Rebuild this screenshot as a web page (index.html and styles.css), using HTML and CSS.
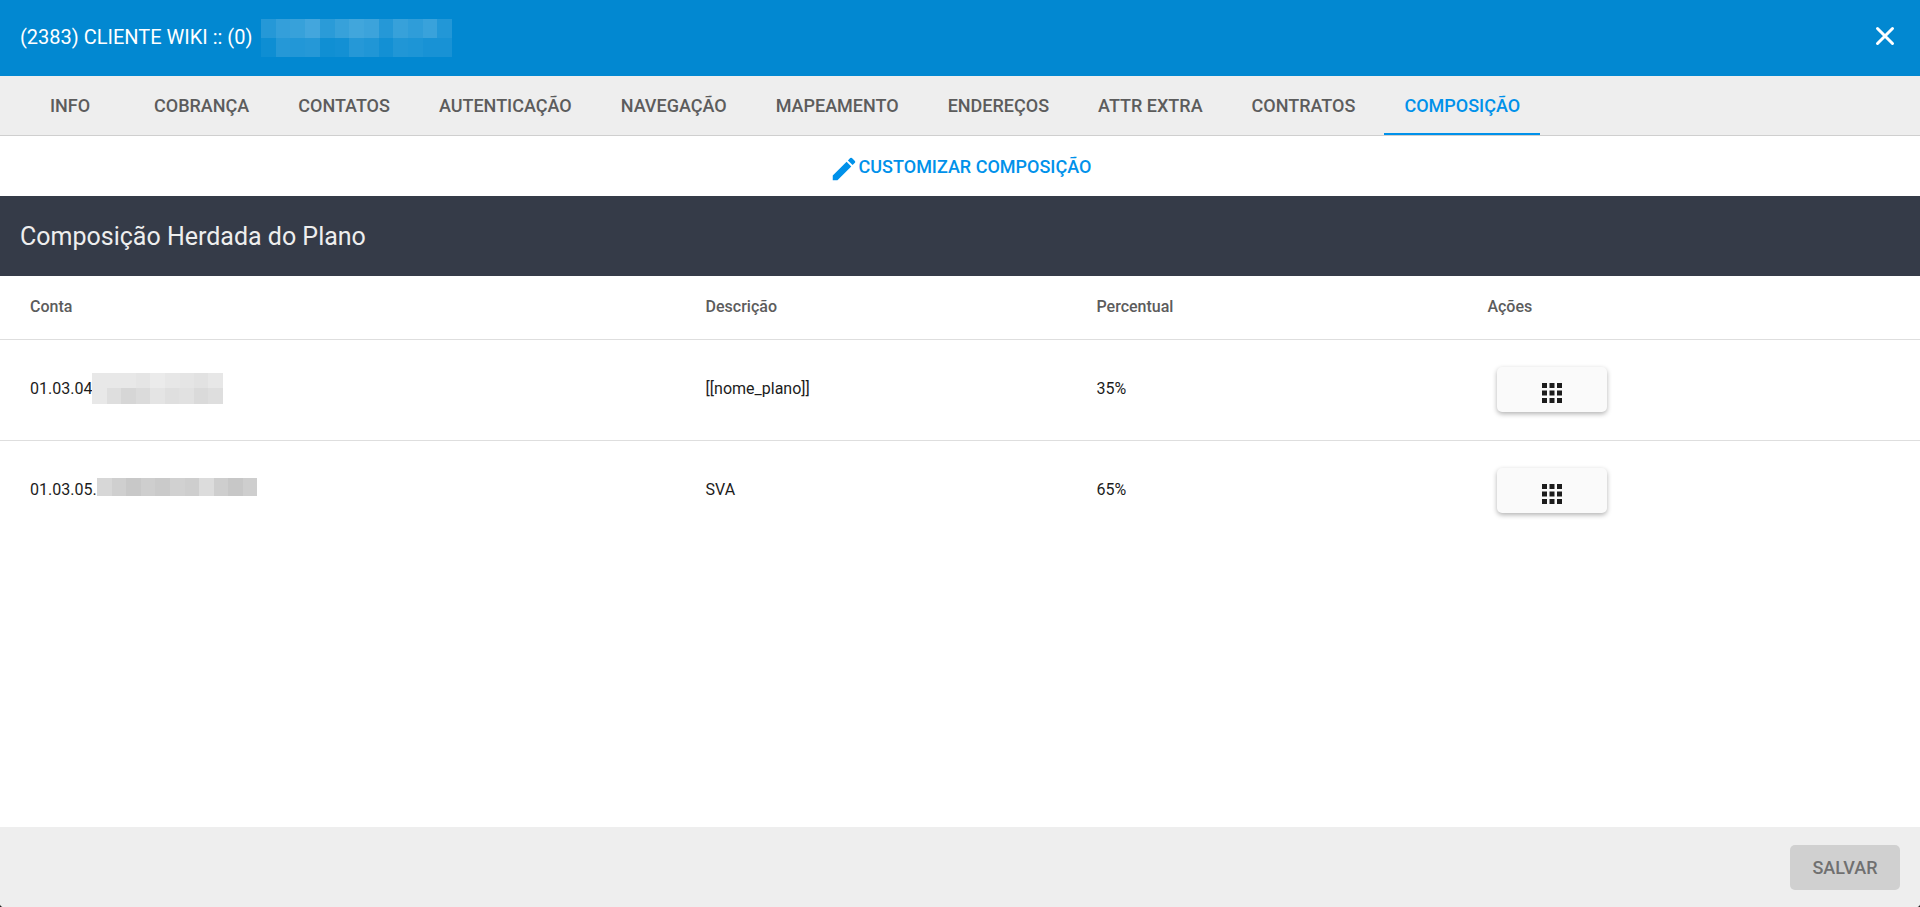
FILE: index.html
```html
<!DOCTYPE html>
<html lang="pt-BR">
<head>
<meta charset="utf-8">
<title>Cliente Wiki</title>
<link rel="stylesheet" href="styles.css">
</head>
<body>
<div class="dialog">
  <header class="toolbar">
    <h1 class="toolbar-title">(2383) CLIENTE WIKI :: (0)</h1>
    <svg class="mosaic mosaic-name" width="191" height="38" viewBox="0 0 191 38" shape-rendering="crispEdges" fill="#fff" aria-hidden="true">
      <g>
        <rect x="0" y="0" width="15" height="19" opacity=".14"/><rect x="15" y="0" width="14" height="19" opacity=".2"/><rect x="29" y="0" width="15" height="19" opacity=".21"/><rect x="44" y="0" width="15" height="19" opacity=".26"/><rect x="59" y="0" width="15" height="19" opacity=".16"/><rect x="74" y="0" width="14" height="19" opacity=".21"/><rect x="88" y="0" width="15" height="19" opacity=".25"/><rect x="103" y="0" width="15" height="19" opacity=".23"/><rect x="118" y="0" width="14" height="19" opacity=".14"/><rect x="132" y="0" width="15" height="19" opacity=".21"/><rect x="147" y="0" width="15" height="19" opacity=".18"/><rect x="162" y="0" width="14" height="19" opacity=".22"/><rect x="176" y="0" width="15" height="19" opacity=".13"/>
      </g>
      <g>
        <rect x="0" y="19" width="15" height="19" opacity=".05"/><rect x="15" y="19" width="14" height="19" opacity=".14"/><rect x="29" y="19" width="15" height="19" opacity=".13"/><rect x="44" y="19" width="15" height="19" opacity=".14"/><rect x="59" y="19" width="15" height="19" opacity=".06"/><rect x="74" y="19" width="14" height="19" opacity=".07"/><rect x="88" y="19" width="15" height="19" opacity=".14"/><rect x="103" y="19" width="15" height="19" opacity=".12"/><rect x="118" y="19" width="14" height="19" opacity=".07"/><rect x="132" y="19" width="15" height="19" opacity=".12"/><rect x="147" y="19" width="15" height="19" opacity=".11"/><rect x="162" y="19" width="14" height="19" opacity=".09"/><rect x="176" y="19" width="15" height="19" opacity=".09"/>
      </g>
    </svg>
    <button class="close" type="button" aria-label="Fechar">
      <svg width="30" height="30" viewBox="0 0 30 30" fill="none" stroke="#fff" stroke-width="3" stroke-linecap="round" aria-hidden="true"><path d="M7.5 7.5l15 15M22.5 7.5l-15 15"/></svg>
    </button>
  </header>
  <nav class="tabs">
    <button class="tab" type="button">INFO</button>
    <button class="tab" type="button">COBRANÇA</button>
    <button class="tab" type="button">CONTATOS</button>
    <button class="tab" type="button">AUTENTICAÇÃO</button>
    <button class="tab" type="button">NAVEGAÇÃO</button>
    <button class="tab" type="button">MAPEAMENTO</button>
    <button class="tab" type="button">ENDEREÇOS</button>
    <button class="tab" type="button">ATTR EXTRA</button>
    <button class="tab" type="button">CONTRATOS</button>
    <button class="tab tab-active" type="button">COMPOSIÇÃO</button>
  </nav>
  <main class="content">
    <div class="customize">
      <button class="customize-button" type="button">
        <svg class="customize-icon" width="30" height="30" viewBox="0 0 24 24" fill="currentColor" aria-hidden="true"><path d="M3 17.25V21h3.75L17.81 9.94l-3.75-3.75L3 17.25zM20.71 7.04a1 1 0 0 0 0-1.41l-2.34-2.34a1 1 0 0 0-1.41 0l-1.83 1.83 3.75 3.75 1.83-1.83z"/></svg>
        <span>CUSTOMIZAR COMPOSIÇÃO</span>
      </button>
    </div>
    <h2 class="section-title">Composição Herdada do Plano</h2>
    <table class="accounts">
      <thead>
        <tr><th class="col-account">Conta</th><th class="col-data">Descrição</th><th class="col-data">Percentual</th><th>Ações</th></tr>
      </thead>
      <tbody>
        <tr>
          <td>
            <div class="account"><span>01.03.04</span>
              <svg class="mosaic" width="131" height="31" viewBox="0 0 131 31" shape-rendering="crispEdges" aria-hidden="true">
                <rect width="44" height="15" fill="#e8e8e8"/><rect x="44" width="14" height="15" fill="#e5e5e5"/><rect x="58" width="15" height="15" fill="#ebebeb"/><rect x="73" width="15" height="15" fill="#e7e7e7"/><rect x="88" width="14" height="15" fill="#e5e5e5"/><rect x="102" width="14" height="15" fill="#e2e2e2"/><rect x="116" width="15" height="15" fill="#e7e7e7"/>
                <rect y="15" width="15" height="16" fill="#e8e8e8"/><rect x="15" y="15" width="14" height="16" fill="#dedede"/><rect x="29" y="15" width="15" height="16" fill="#d6d6d6"/><rect x="44" y="15" width="14" height="16" fill="#dbdbdb"/><rect x="58" y="15" width="15" height="16" fill="#e4e4e4"/><rect x="73" y="15" width="14" height="16" fill="#dfdfdf"/><rect x="87" y="15" width="15" height="16" fill="#e1e1e1"/><rect x="102" y="15" width="14" height="16" fill="#dadada"/><rect x="116" y="15" width="15" height="16" fill="#dedede"/>
              </svg>
            </div>
          </td>
          <td>[[nome_plano]]</td>
          <td>35%</td>
          <td>
            <button class="actions" type="button" aria-label="Ações">
              <svg width="30" height="30" viewBox="0 0 24 24" fill="#1c1c1c" aria-hidden="true"><path d="M4 8h4V4H4v4zm6 12h4v-4h-4v4zm-6 0h4v-4H4v4zm0-6h4v-4H4v4zm6 0h4v-4h-4v4zm6-10v4h4V4h-4zm-6 4h4V4h-4v4zm6 6h4v-4h-4v4zm0 6h4v-4h-4v4z"/></svg>
            </button>
          </td>
        </tr>
        <tr>
          <td>
            <div class="account"><span>01.03.05.</span>
              <svg class="mosaic mosaic-low" width="160" height="18" viewBox="0 0 160 18" shape-rendering="crispEdges" aria-hidden="true">
                <rect width="15" height="18" fill="#d7d7d7"/><rect x="15" width="14" height="18" fill="#cfcfcf"/><rect x="29" width="15" height="18" fill="#c8c8c8"/><rect x="44" width="14" height="18" fill="#cecece"/><rect x="58" width="15" height="18" fill="#cacaca"/><rect x="73" width="15" height="18" fill="#d1d1d1"/><rect x="88" width="14" height="18" fill="#cecece"/><rect x="102" width="15" height="18" fill="#dcdcdc"/><rect x="117" width="14" height="18" fill="#cecece"/><rect x="131" width="15" height="18" fill="#c7c7c7"/><rect x="146" width="14" height="18" fill="#cecece"/>
              </svg>
            </div>
          </td>
          <td>SVA</td>
          <td>65%</td>
          <td>
            <button class="actions" type="button" aria-label="Ações">
              <svg width="30" height="30" viewBox="0 0 24 24" fill="#1c1c1c" aria-hidden="true"><path d="M4 8h4V4H4v4zm6 12h4v-4h-4v4zm-6 0h4v-4H4v4zm0-6h4v-4H4v4zm6 0h4v-4h-4v4zm6-10v4h4V4h-4zm-6 4h4V4h-4v4zm6 6h4v-4h-4v4zm0 6h4v-4h-4v4z"/></svg>
            </button>
          </td>
        </tr>
      </tbody>
    </table>
  </main>
  <footer class="footer">
    <button class="save" type="button" disabled>SALVAR</button>
  </footer>
</div>
</body>
</html>
```
FILE: styles.css
```css
* {
  box-sizing: border-box;
}

body {
  margin: 0;
  background: #222;
  color: #1c1c1c;
  font-family: Roboto, "Liberation Sans", sans-serif;
  font-size: 16px;
}

button {
  margin: 0;
  padding: 0;
  border: 0;
  background: none;
  font: inherit;
  color: inherit;
}

svg {
  display: block;
  flex: none;
}

.dialog {
  display: flex;
  flex-direction: column;
  min-height: 100vh;
  border-radius: 0 0 4px 4px;
  overflow: hidden;
  background: #fff;
}

.toolbar {
  display: flex;
  align-items: center;
  padding: 19px 20px;
  background: #0288d1;
  color: #fff;
}

.toolbar-title {
  margin: 0;
  padding-bottom: 3px;
  font-size: 20px;
  line-height: 24px;
  font-weight: 400;
}

.mosaic-name {
  margin-left: 9px;
}

.close {
  margin-left: auto;
  padding-bottom: 4px;
}

.tabs {
  display: flex;
  gap: 9px;
  padding-left: 15px;
  background: #eee;
  border-bottom: 1px solid #cfcfcf;
  color: #5c5c5c;
}

.tab {
  min-width: 110px;
  padding: 19px 20px 16px;
  border-bottom: 2px solid transparent;
  font-size: 18px;
  line-height: 22px;
  font-weight: 500;
}

.tab-active {
  border-bottom-color: #0091ea;
  color: #0091ea;
}

.content {
  flex: 1;
}

.customize {
  display: flex;
  justify-content: center;
  padding: 14px 0 12px;
}

.customize-button {
  display: flex;
  align-items: center;
  color: #0091ea;
  font-size: 18px;
  line-height: 30px;
  font-weight: 500;
}

.customize-icon {
  margin-top: 4px;
}

.section-title {
  margin: 0;
  padding: 26px 20px 24px;
  background: #353b48;
  color: #eee;
  font-size: 25px;
  line-height: 30px;
  font-weight: 400;
}

.accounts {
  width: 100%;
  border-collapse: collapse;
  table-layout: fixed;
}

.accounts th,
.accounts td {
  padding: 0;
  text-align: left;
}

.accounts th {
  height: 63px;
  padding-bottom: 2px;
  border-bottom: 1px solid #dedede;
  color: #5c5c5c;
  font-weight: 500;
}

.accounts td {
  height: 101px;
  padding-bottom: 2px;
}

.accounts tr + tr td {
  border-top: 1px solid #dedede;
}

.accounts th:first-child,
.accounts td:first-child {
  padding-left: 30px;
}

.accounts td:last-child {
  padding-bottom: 0;
}

.col-account {
  width: 36.75%;
}

.col-data {
  width: 20.36%;
}

.account {
  display: flex;
  align-items: center;
}

.mosaic-low {
  margin-bottom: 6px;
}

.actions {
  display: flex;
  justify-content: center;
  align-items: center;
  width: 110px;
  height: 45px;
  margin-left: 10px;
  padding-top: 6px;
  border-radius: 5px;
  background: #fafafa;
  box-shadow: 0 2px 5px rgba(0, 0, 0, 0.3);
}

.footer {
  display: flex;
  justify-content: flex-end;
  padding: 18px 20px 17px;
  background: #eee;
}

.save {
  min-width: 110px;
  height: 45px;
  border-radius: 5px;
  background: #d0d0d0;
  color: #707070;
  font-size: 18px;
  font-weight: 500;
}
```
